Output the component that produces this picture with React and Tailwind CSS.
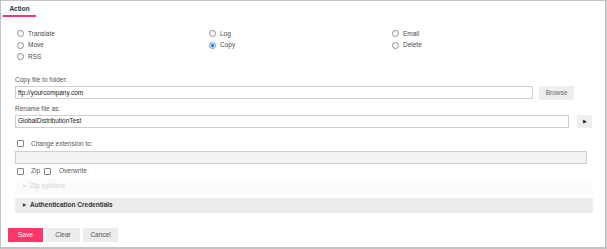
import React from 'react';

const font = { fontFamily: '"Liberation Sans", Arial, sans-serif' };

function Radio({ label, checked }) {
    return (
        <div className="flex items-center h-[11.5px] gap-[4px]">
            {checked ? (
                <span className="w-[7px] h-[7px] rounded-full bg-[#cfe1fb] border border-[#6aa3ee] flex items-center justify-center">
                    <span className="w-[3px] h-[3px] rounded-full bg-[#1a6be0]" />
                </span>
            ) : (
                <span className="w-[7px] h-[7px] rounded-full border border-[#8c8c8c] bg-white" />
            )}
            <span className="text-[6.5px] leading-[8px] text-[#4a4a4a]">{label}</span>
        </div>
    );
}

function Check({ className = '' }) {
    return <span className={`block w-[7px] h-[7px] rounded-[1px] border border-[#858585] bg-white shrink-0 ${className}`} />;
}

export default function App() {
    return (
        <div style={font} className="w-[607px] h-[249px] bg-white border-t border-l border-r-2 border-b-2 border-[#c4c4c4] flex flex-col">
            <div className="ml-[2px] w-[33px] pt-[4px] pb-[2px] border-b-2 border-[#f4356a] text-center text-[6.5px] leading-[8px] font-bold text-[#333]">
                Action
            </div>

            <div className="mt-[11px] pl-[16px] grid grid-cols-[192px_183px_1fr]">
                <Radio label="Translate" />
                <Radio label="Log" />
                <Radio label="Email" />
                <Radio label="Move" />
                <Radio label="Copy" checked />
                <Radio label="Delete" />
                <Radio label="RSS" />
            </div>

            <div className="pl-[14px] flex flex-col text-[6.5px] leading-[8px]">
                <div className="mt-[13px] text-[#555]">Copy file to folder:</div>
                <div className="mt-[2px] flex items-center gap-[6px]">
                    <div className="w-[518px] h-[13px] border border-[#cfcfcf] pl-[2px] flex items-center text-[#222]">ftp://yourcompany.com</div>
                    <div className="w-[35px] h-[14px] bg-[#eeeeee] flex items-center justify-center text-[#666]">Browse</div>
                </div>

                <div className="mt-[5px] text-[#555]">Rename file as:</div>
                <div className="mt-[2px] flex items-center gap-[8px]">
                    <div className="w-[554px] h-[13px] border border-[#cfcfcf] pl-[2px] flex items-center text-[#222]">GlobalDistributionTest</div>
                    <div className="w-[15px] h-[13px] bg-[#eeeeee] flex items-center justify-center text-[#222] text-[5px]">▶</div>
                </div>

                <div className="mt-[12px] pl-[2px] flex items-center gap-[7px] h-[8px]">
                    <Check />
                    <span className="text-[#555]">Change extension to:</span>
                </div>
                <div className="mt-[3px] w-[572px] h-[13px] border border-[#cfcfcf] bg-[#f3f3f3]" />

                <div className="mt-[3.5px] pl-[2px] flex items-center h-[8px]">
                    <Check />
                    <span className="ml-[7px] text-[#555]">Zip</span>
                    <Check className="ml-[4px]" />
                    <span className="ml-[8px] text-[#555]">Overwrite</span>
                </div>

                <div className="mt-[3.5px] w-[578px] h-[15px] bg-[#fbfbfb] flex items-center pl-[8px] gap-[4px] text-[#dcdcdc] font-bold">
                    <span className="text-[4px]">▶</span>
                    <span>Zip options</span>
                </div>
                <div className="mt-[4px] w-[578px] h-[15px] bg-[#ececec] flex items-center pl-[8px] gap-[4px] text-[#333] font-bold">
                    <span className="text-[4px]">▶</span>
                    <span>Authentication Credentials</span>
                </div>
            </div>

            <div className="mt-[15px] pl-[7px] flex items-center gap-[3px] text-[6.5px] leading-[8px]">
                <div className="w-[35px] h-[14px] bg-[#ff3768] text-white flex items-center justify-center">Save</div>
                <div className="w-[34px] h-[14px] bg-[#ececec] text-[#555] flex items-center justify-center">Clear</div>
                <div className="w-[35px] h-[14px] bg-[#ececec] text-[#555] flex items-center justify-center">Cancel</div>
            </div>
        </div>
    );
}
